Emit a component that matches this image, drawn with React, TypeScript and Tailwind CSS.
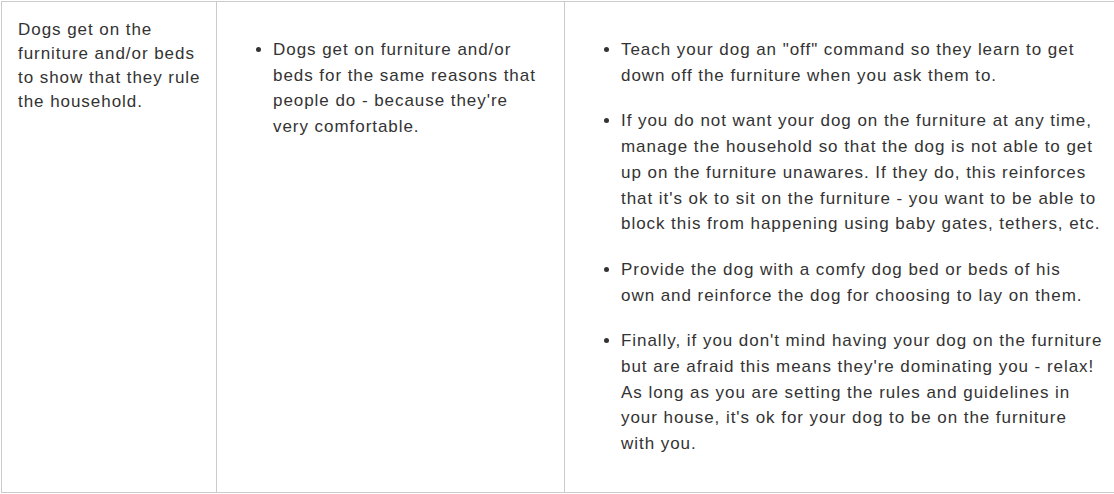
const firstCell = ["Dogs get on the", "furniture and/or beds", "to show that they rule", "the household."];

const whyItems = [
  ["Dogs get on furniture and/or", "beds for the same reasons that", "people do - because they're", "very comfortable."],
];

const whatToDo = [
  ["Teach your dog an \"off\" command so they learn to get", "down off the furniture when you ask them to."],
  [
    "If you do not want your dog on the furniture at any time,",
    "manage the household so that the dog is not able to get",
    "up on the furniture unawares. If they do, this reinforces",
    "that it's ok to sit on the furniture - you want to be able to",
    "block this from happening using baby gates, tethers, etc.",
  ],
  ["Provide the dog with a comfy dog bed or beds of his", "own and reinforce the dog for choosing to lay on them."],
  [
    "Finally, if you don't mind having your dog on the furniture",
    "but are afraid this means they're dominating you - relax!",
    "As long as you are setting the rules and guidelines in",
    "your house, it's ok for your dog to be on the furniture",
    "with you.",
  ],
];

function Lines({ lines }: { lines: string[] }) {
  return (
    <>
      {lines.map((line, i) => (
        <span key={i}>
          {line}
          {i < lines.length - 1 && <br />}
        </span>
      ))}
    </>
  );
}

function BulletList({ items }: { items: string[][] }) {
  return (
    <ul className="mt-[19px] list-disc pl-10 leading-[25.7px]">
      {items.map((item, i) => (
        <li key={i} className="mb-5 whitespace-nowrap last:mb-[19px]">
          <Lines lines={item} />
        </li>
      ))}
    </ul>
  );
}

export default function App() {
  return (
    <div
      className="min-h-screen overflow-hidden bg-white pl-[1px] pt-[1px] text-[17px] tracking-[0.95px] text-[#333333]"
      style={{ fontFamily: '"Liberation Sans", Arial, sans-serif' }}
    >
      <div className="flex items-stretch border-y border-l border-[#cbcbcb]">
        <div className="w-[215px] shrink-0 border-r border-[#cbcbcb] p-4 leading-6 whitespace-nowrap">
          <Lines lines={firstCell} />
        </div>
        <div className="w-[348px] shrink-0 border-r border-[#cbcbcb] py-4 pl-4 pr-[25px]">
          <BulletList items={whyItems} />
        </div>
        <div className="flex-1 p-4">
          <BulletList items={whatToDo} />
        </div>
      </div>
    </div>
  );
}
